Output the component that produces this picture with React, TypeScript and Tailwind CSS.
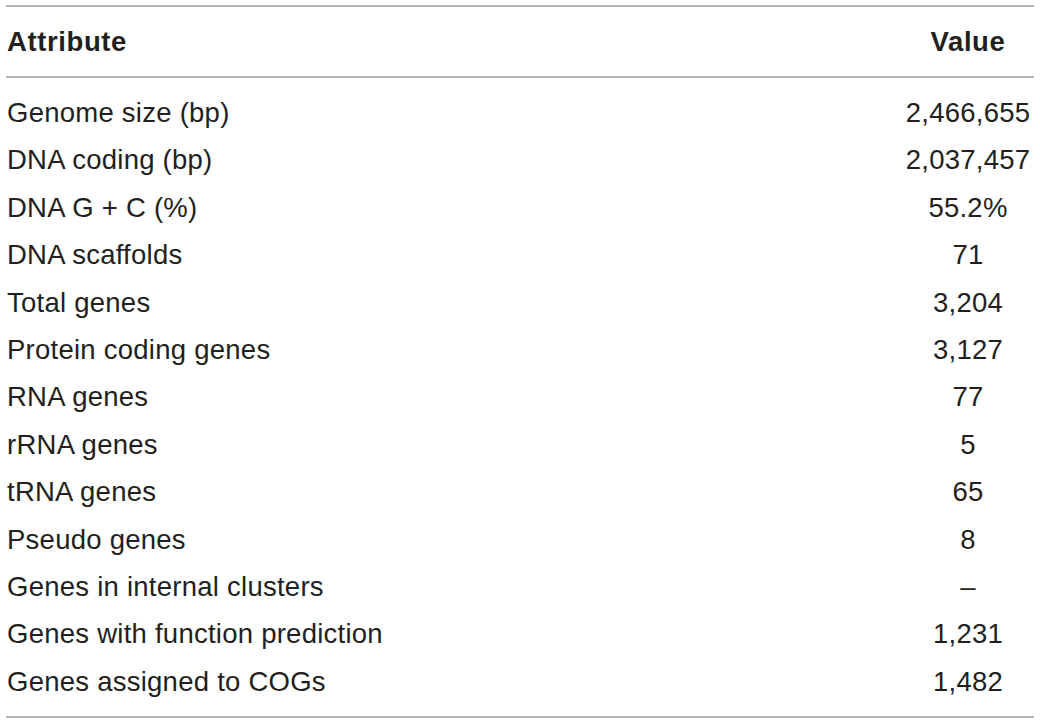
import React from "react";

const rows: [string, string][] = [
  ["Genome size (bp)", "2,466,655"],
  ["DNA coding (bp)", "2,037,457"],
  ["DNA G + C (%)", "55.2%"],
  ["DNA scaffolds", "71"],
  ["Total genes", "3,204"],
  ["Protein coding genes", "3,127"],
  ["RNA genes", "77"],
  ["rRNA genes", "5"],
  ["tRNA genes", "65"],
  ["Pseudo genes", "8"],
  ["Genes in internal clusters", "–"],
  ["Genes with function prediction", "1,231"],
  ["Genes assigned to COGs", "1,482"],
];

export default function App() {
  return (
    <div
      className="w-[1040px] h-[722px] bg-white text-[#231f20] pt-[5px] pl-[6px]"
      style={{ fontFamily: '"Liberation Sans", Arial, sans-serif' }}
    >
      <div className="w-[1028px]">
        <div className="h-[2px] bg-[#b3b3b3]" />
        <div className="flex items-center h-[69px] text-[27.5px] font-bold tracking-[0.6px]">
          <div className="flex-1 pl-px">Attribute</div>
          <div className="w-[128px] text-center mr-[2px]">Value</div>
        </div>
        <div className="h-[2px] bg-[#b3b3b3]" />
        <div className="pt-[11px] pb-[11px]">
          {rows.map(([a, v]) => (
            <div key={a} className="flex h-[47.4px] leading-[47.4px] text-[27.5px] tracking-[0.25px]">
              <div className="flex-1 pl-px whitespace-nowrap">{a}</div>
              <div className="w-[128px] text-center mr-[2px] whitespace-nowrap">{v}</div>
            </div>
          ))}
        </div>
        <div className="h-[2px] bg-[#b3b3b3]" />
      </div>
    </div>
  );
}
